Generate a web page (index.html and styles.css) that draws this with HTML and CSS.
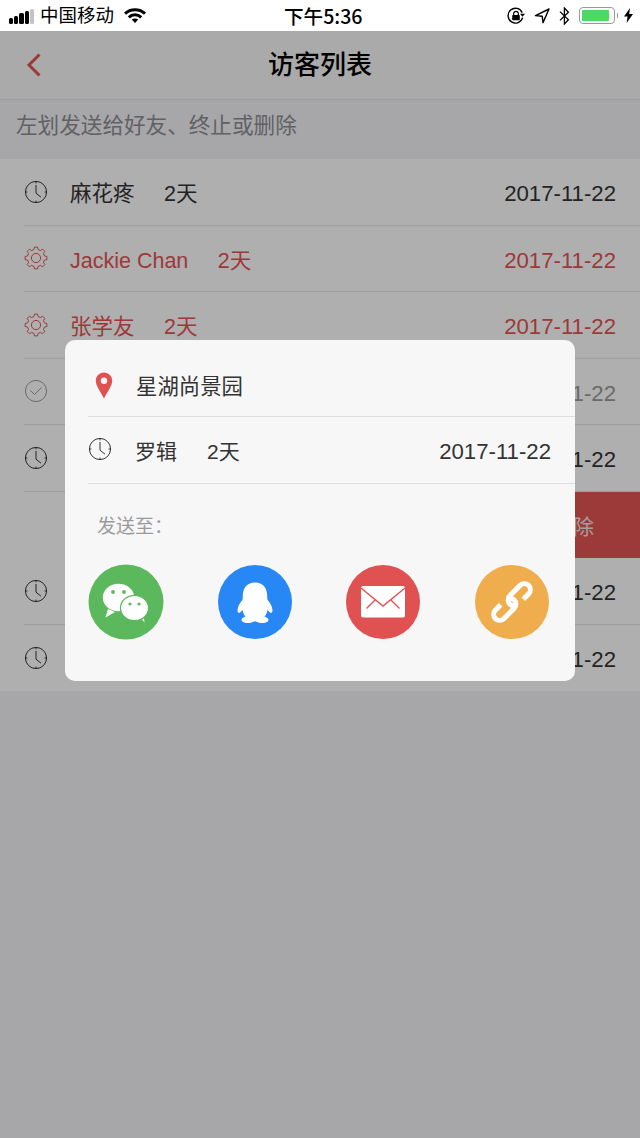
FILE: index.html
```html
<!DOCTYPE html>
<html lang="zh-CN">
<head>
<meta charset="utf-8">
<title>访客列表</title>
<link rel="stylesheet" href="styles.css">
</head>
<body>
<svg class="defs" aria-hidden="true">
  <symbol id="clock" viewBox="-12 -12 24 24">
    <circle r="10.6" fill="none" stroke="currentColor" stroke-width="1"/>
    <path d="M0 -10.6V-8.6M0 10.6V8.6M-10.6 0H-8.6M10.6 0H8.6" fill="none" stroke="currentColor" stroke-width="1"/>
    <path d="M0 -7V1.2L5 5.2" fill="none" stroke="currentColor" stroke-width="1"/>
  </symbol>
  <symbol id="gear" viewBox="-12 -12 24 24">
    <path d="M-2.1 -8.44L-1.53 -10.89L1.53 -10.89L2.1 -8.44L4.48 -7.45L6.62 -8.78L8.78 -6.62L7.45 -4.48L8.44 -2.1L10.89 -1.53L10.89 1.53L8.44 2.1L7.45 4.48L8.78 6.62L6.62 8.78L4.48 7.45L2.1 8.44L1.53 10.89L-1.53 10.89L-2.1 8.44L-4.48 7.45L-6.62 8.78L-8.78 6.62L-7.45 4.48L-8.44 2.1L-10.89 1.53L-10.89 -1.53L-8.44 -2.1L-7.45 -4.48L-8.78 -6.62L-6.62 -8.78L-4.48 -7.45Z" fill="none" stroke="currentColor" stroke-width="1" stroke-linejoin="round"/>
    <circle r="4.6" fill="none" stroke="currentColor" stroke-width="1"/>
  </symbol>
  <symbol id="check" viewBox="-12 -12 24 24">
    <circle r="10.6" fill="none" stroke="currentColor" stroke-width="1"/>
    <path d="M-5.5 -0.5L-1.5 3.5L5.5 -3.5" fill="none" stroke="currentColor" stroke-width="1"/>
  </symbol>
</svg>

<header class="status">
  <div class="status-left">
    <span class="signal"><i class="b1"></i><i class="b2"></i><i class="b3"></i><i class="b4"></i><i class="b5"></i></span>
    <span class="carrier">中国移动</span>
    <svg class="wifi" width="22" height="15" viewBox="0 0 22 15">
      <path d="M1 5.6C6.6 0.4 15.4 0.4 21 5.6" fill="none" stroke="#000" stroke-width="3"/>
      <path d="M4.8 9.4C8.2 6 13.8 6 17.2 9.4" fill="none" stroke="#000" stroke-width="3"/>
      <path d="M7.8 11.6C9.6 10 12.4 10 14.2 11.6L11 15Z" fill="#000"/>
    </svg>
  </div>
  <div class="time">下午5:36</div>
  <div class="status-right">
    <svg class="i-rot" width="18" height="18" viewBox="0 0 18 18">
      <path d="M15.6 10.6A7.4 7.4 0 1 1 15.2 5.6" fill="none" stroke="#000" stroke-width="1.4"/>
      <path d="M13 6.8H18L15.6 9.8Z" fill="#000"/>
      <path d="M6.7 8V6.6A2.3 2.3 0 0 1 11.3 6.6V8" fill="none" stroke="#000" stroke-width="1.2"/>
      <rect x="5.2" y="8" width="7.6" height="5.2" rx="0.8" fill="#000"/>
    </svg>
    <svg class="i-loc" width="16" height="16" viewBox="0 0 16 16">
      <path d="M15 1L1.5 7.6L8.2 8.2L9 14.6Z" fill="none" stroke="#000" stroke-width="1.4" stroke-linejoin="round"/>
    </svg>
    <svg class="i-bt" width="11" height="18" viewBox="0 0 11 18">
      <path d="M1 4.6L9.4 12.8L5.4 17V1L9.4 5.2L1 13.4" fill="none" stroke="#000" stroke-width="1.3"/>
    </svg>
    <span class="battery"><span class="battery-fill"></span></span>
    <span class="nub"></span>
    <svg class="i-bolt" width="9" height="15" viewBox="0 0 9 15">
      <path d="M6 0L0 8.4H3.6L2.6 15L9 6H5.2Z" fill="#000"/>
    </svg>
  </div>
</header>

<div class="navbar">
  <svg class="back" width="16" height="24" viewBox="0 0 16 24"><path d="M13.5 1.5L3 12L13.5 22.5" fill="none" stroke="#e05252" stroke-width="3"/></svg>
  <h1 class="title">访客列表</h1>
</div>
<p class="hint">左划发送给好友、终止或删除</p>

<main class="list">
  <div class="row">
    <svg class="ico"><use href="#clock"/></svg>
    <div class="info"><span class="name">麻花疼</span><span class="days">2天</span><span class="date">2017-11-22</span></div>
  </div>
  <div class="row red">
    <svg class="ico"><use href="#gear"/></svg>
    <div class="info"><span class="name">Jackie Chan</span><span class="days">2天</span><span class="date">2017-11-22</span></div>
  </div>
  <div class="row red">
    <svg class="ico"><use href="#gear"/></svg>
    <div class="info"><span class="name">张学友</span><span class="days">2天</span><span class="date">2017-11-22</span></div>
  </div>
  <div class="row muted">
    <svg class="ico"><use href="#check"/></svg>
    <div class="info"><span class="date">2017-11-22</span></div>
  </div>
  <div class="row">
    <svg class="ico"><use href="#clock"/></svg>
    <div class="info"><span class="date">2017-11-22</span></div>
  </div>
  <div class="row swiped">
    <span class="action">删除</span>
  </div>
  <div class="row">
    <svg class="ico"><use href="#clock"/></svg>
    <div class="info"><span class="date">2017-11-22</span></div>
  </div>
  <div class="row last">
    <svg class="ico"><use href="#clock"/></svg>
    <div class="info"><span class="date">2017-11-22</span></div>
  </div>
</main>

<div class="overlay">
  <section class="modal">
    <div class="m-place">
      <svg class="pin" width="18" height="27" viewBox="0 0 18 27">
        <path fill-rule="evenodd" d="M9 0.5C4.2 0.5 0.8 4.2 0.8 8.8C0.8 13.6 5.6 20 9 26.5C12.4 20 17.2 13.6 17.2 8.8C17.2 4.2 13.8 0.5 9 0.5ZM9 5.6A3.2 3.2 0 1 1 9 12A3.2 3.2 0 1 1 9 5.6Z" fill="#e05252"/>
      </svg>
      <span class="place">星湖尚景园</span>
    </div>
    <div class="m-row">
      <svg class="m-ico"><use href="#clock"/></svg>
      <div class="info"><span class="m-name">罗辑</span><span class="days">2天</span><span class="date">2017-11-22</span></div>
    </div>
    <div class="send-label">发送至：</div>
    <div class="share">
      <svg class="s-ico" viewBox="0 0 74 74">
        <circle cx="37" cy="37" r="37.5" fill="#5cb85c"/>
        <path d="M19 44L16.5 52.5L26 47Z" fill="#fff"/>
        <ellipse cx="29.5" cy="32.5" rx="15.7" ry="13.8" fill="#fff"/>
        <path d="M51 52L55.5 57.5L54.5 50Z" fill="#fff"/>
        <ellipse cx="45.5" cy="43" rx="14" ry="12.7" fill="#fff" stroke="#5cb85c" stroke-width="1.2"/>
        <circle cx="24" cy="27" r="1.9" fill="#5cb85c"/>
        <circle cx="35" cy="27" r="1.9" fill="#5cb85c"/>
        <circle cx="41" cy="39" r="1.6" fill="#5cb85c"/>
        <circle cx="50" cy="39" r="1.6" fill="#5cb85c"/>
      </svg>
      <svg class="s-ico" viewBox="0 0 74 74">
        <circle cx="37" cy="37" r="37" fill="#2787f5"/>
        <path d="M37 17.5C28 17.5 24.8 24.5 24.8 31C24.8 33 24.8 34 24.3 35C21.8 38 19.5 42 19.5 45.5C19.5 47.5 20.8 48.5 22 47.5L24.5 45C25 48 26 50 27.5 51.5C24.5 52.5 22.8 54 23.8 56C25 58 31 58.8 34 57.2L37 56.2L40 57.2C43 58.8 49 58 50.2 56C51.2 54 49.5 52.5 46.5 51.5C48 50 49 48 49.5 45L52 47.5C53.2 48.5 54.5 47.5 54.5 45.5C54.5 42 52.2 38 49.7 35C49.2 34 49.2 33 49.2 31C49.2 24.5 46 17.5 37 17.5Z" fill="#fff"/>
      </svg>
      <svg class="s-ico" viewBox="0 0 74 74">
        <circle cx="37" cy="37" r="37" fill="#e05252"/>
        <rect x="15" y="21" width="44" height="31.5" rx="2" fill="#fff"/>
        <path d="M15 23L37 41L59 23M20.5 43.5L29 35M53.5 43.5L45 35" fill="none" stroke="#e05252" stroke-width="1.4"/>
      </svg>
      <svg class="s-ico" viewBox="0 0 74 74">
        <circle cx="37" cy="37" r="37" fill="#f0ad4e"/>
        <g transform="translate(37 37) rotate(-45)" fill="none" stroke="#fff" stroke-width="5">
          <path d="M10 6H17.5A6 6 0 0 0 17.5 -6H3A6 6 0 0 0 -3 0A6 6 0 0 0 0 5"/>
          <path d="M-10 -6H-17.5A6 6 0 0 0 -17.5 6H-3A6 6 0 0 0 3 0A6 6 0 0 0 0 -5"/>
        </g>
      </svg>
    </div>
  </section>
</div>
</body>
</html>
```
FILE: styles.css
```css
* { box-sizing: border-box; }
html, body { margin: 0; padding: 0; }
body {
  position: relative;
  width: 640px;
  height: 1138px;
  overflow: hidden;
  background: #efeff4;
  color: #333;
  font-family: "Liberation Sans", "Noto Sans CJK SC", sans-serif;
}
.defs { position: absolute; width: 0; height: 0; }

/* status bar */
.status {
  position: relative;
  z-index: 2;
  height: 31px;
  background: #fff;
  color: #000;
  display: grid;
  grid-template-columns: 275px 78px 1fr;
  align-items: center;
  padding: 0 7px 0 9px;
}
.status-left, .status-right { display: flex; align-items: center; }
.status-right { justify-content: flex-end; }
.signal { display: flex; align-items: flex-end; gap: 1px; width: 25px; height: 15px; margin-top: 1px; }
.signal i { display: block; width: 4.2px; background: #000; border-radius: 1.5px; }
.signal .b1 { height: 6px; }
.signal .b2 { height: 8px; }
.signal .b3 { height: 11px; }
.signal .b4 { height: 13px; }
.signal .b5 { height: 15px; background: #c4c4c4; }
.carrier { margin-left: 6px; font-size: 18.5px; line-height: 31px; }
.wifi { margin-left: 10px; margin-top: -1px; }
.time {
  font-family: "Noto Sans CJK SC", sans-serif;
  font-size: 19.6px;
  font-weight: 500;
  white-space: nowrap;
  text-align: center;
  line-height: 31px;
}
.i-rot { margin-right: 9px; }
.i-loc { margin-right: 9px; }
.i-bt { margin-right: 9px; }
.battery {
  width: 36px;
  height: 17px;
  border: 1.5px solid #9a9a9a;
  border-radius: 4px;
  padding: 2px 5px 2px 2px;
  display: flex;
}
.battery-fill { flex: 1; background: #4cd964; border-radius: 1px; }
.nub { width: 1.5px; height: 5px; margin-left: 1.5px; background: #9a9a9a; }
.i-bolt { margin-left: 6px; }

/* nav */
.navbar {
  position: relative;
  z-index: 1;
  height: 68px;
  background: #f4f4f4;
  box-shadow: 0 1px 3px rgba(0, 0, 0, .08);
  display: flex;
  align-items: center;
  justify-content: center;
}
.back { position: absolute; left: 26px; top: 22px; }
.title { margin: 0; font-size: 26px; font-weight: 500; color: #000; line-height: 1; }
.hint {
  margin: 0;
  height: 60px;
  padding: 0 16px;
  font-size: 21.6px;
  line-height: 53px;
  color: #8c8c90;
}

/* list */
.list { background: #fbfbfb; }
.row {
  height: 66.5px;
  margin-left: 24px;
  padding-right: 24px;
  border-bottom: 1px solid #e2e2e2;
  display: flex;
  align-items: center;
  font-size: 21.5px;
  color: #333;
}
.row.last { border-bottom: 0; }
.row.red { color: #e05252; }
.row.muted { color: #999; }
.ico { width: 24px; height: 24px; flex: none; margin-right: 22px; }
.info {
  flex: 1;
  display: flex;
  align-items: baseline;
  line-height: 30px;
  padding-top: 3px;
}
.info::before {
  content: "\00a0";
  width: 0;
  font-family: "Noto Sans CJK SC", sans-serif;
  font-size: 21.5px;
}
.name { margin-right: 29.5px; white-space: nowrap; }
.days { white-space: nowrap; }
.date { margin-left: auto; font-size: 22.2px; white-space: nowrap; }
.row.swiped { padding-right: 0; margin-left: 24px; border-bottom: 0; justify-content: flex-end; }
.action {
  width: 134px;
  height: 100%;
  background: #e05252;
  color: #f0e0e0;
  display: flex;
  align-items: center;
  justify-content: center;
  font-size: 21px;
}

/* overlay + dialog */
.overlay {
  position: absolute;
  inset: 31px 0 0 0;
  z-index: 1;
  background: rgba(0, 0, 0, .3);
  padding: 309px 65px 0;
}
.modal {
  height: 341px;
  background: #f7f7f7;
  border-radius: 10px;
  padding-left: 23px;
  color: #333;
}
.m-place {
  height: 76.5px;
  border-bottom: 1px solid #dedede;
  display: flex;
  align-items: center;
  padding: 14px 0 0 7px;
  font-size: 21.4px;
}
.pin { flex: none; margin-right: 23px; margin-top: 2px; }
.place { white-space: nowrap; }
.m-row {
  height: 67px;
  border-bottom: 1px solid #dedede;
  display: flex;
  align-items: center;
  padding-right: 24px;
  font-size: 21px;
}
.m-ico { width: 24px; height: 24px; flex: none; margin-right: 23px; margin-top: -1px; }
.m-name { margin-right: 30px; white-space: nowrap; }
.send-label {
  height: 81px;
  padding: 28px 0 0 9px;
  font-size: 19px;
  line-height: 30px;
  color: #9a9a9a;
}
.share {
  display: flex;
  justify-content: space-between;
  margin-right: 26px;
  margin-left: 1px;
}
.s-ico { width: 74px; height: 74px; flex: none; overflow: visible; }
```
